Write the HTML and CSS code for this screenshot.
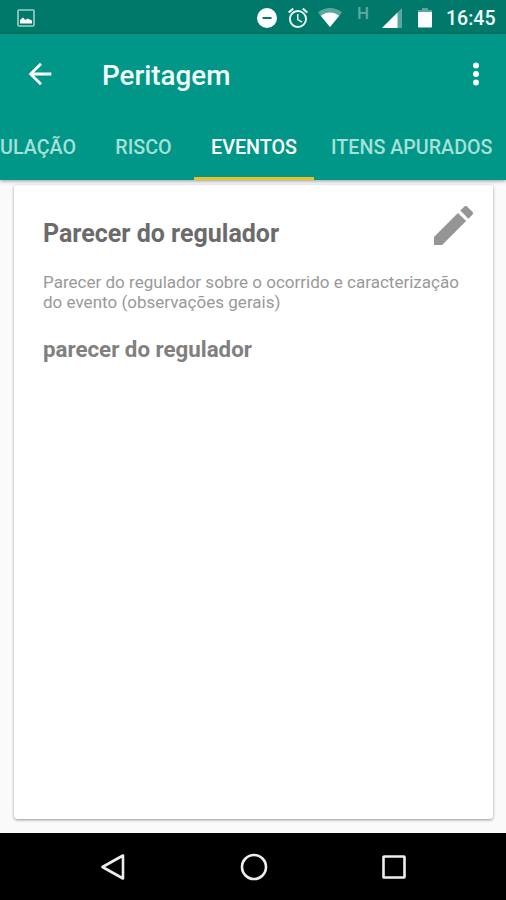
FILE: index.html
```html
<!DOCTYPE html>
<html lang="pt-BR">
<head>
  <meta charset="UTF-8" />
  <meta name="viewport" content="width=device-width, initial-scale=1.0"/>
  <title>Peritagem</title>
  <link rel="stylesheet" href="styles.css">
</head>
<body>

  <!-- Status bar -->
  <div class="status-bar">
    <svg class="picture-icon" viewBox="0 0 18 18" width="18" height="18">
      <rect x="1" y="1" width="16" height="16" rx="1" fill="none" stroke="#9fd0c9" stroke-width="1.6"/>
      <path d="M3 14.5V11l3-2.5 2.5 2.5 2-1.5 4.5 2v3z" fill="#fff"/>
    </svg>
    <div class="status-icons">
      <svg class="dnd-icon" viewBox="0 0 20 20" width="20" height="20">
        <circle cx="10" cy="10" r="10" fill="#fff"/>
        <path d="M5.5 10h9" stroke="#00796b" stroke-width="2"/>
      </svg>
      <svg class="alarm-icon" viewBox="2 2 20 20" width="20" height="20" fill="#e6f5f3">
        <path d="M22 5.72l-4.6-3.86-1.29 1.53 4.6 3.86L22 5.72zM7.88 3.39L6.6 1.86 2 5.71l1.29 1.53 4.59-3.85zM12.5 8H11v6l4.75 2.85.75-1.23-4-2.37V8zM12 4c-4.97 0-9 4.03-9 9s4.02 9 9 9a9 9 0 0 0 0-18zm0 16c-3.87 0-7-3.13-7-7s3.13-7 7-7 7 3.13 7 7-3.13 7-7 7z"/>
      </svg>
      <svg class="wifi-icon" viewBox="0 0 24 19" width="24" height="19">
        <path d="M12 19L0 4.5C3.400 1.500 7.600 0 12 0s8.600 1.500 12 4.500z" fill="#fff" fill-opacity=".35"/>
        <path d="M12 19L2.800 7.800C5.500 5.600 8.700 4.400 12 4.400s6.500 1.200 9.200 3.400z" fill="#fff"/>
      </svg>
      <span class="network">H</span>
      <svg class="signal-icon" viewBox="0 0 20 20" width="20" height="20">
        <path d="M0 20L20 0v20z" fill="#fff" fill-opacity=".35"/>
        <path d="M0 20L15.500 4.500V20z" fill="#fff"/>
      </svg>
      <svg class="battery-icon" viewBox="0 0 14 20" width="14" height="20">
        <path d="M4 0h6v2h4v3H0V2h4z" fill="#fff" fill-opacity=".35"/>
        <path d="M0 4h14v14.500a1 1 0 0 1-1 1H1a1 1 0 0 1-1-1z" fill="#fff"/>
      </svg>
      <span class="clock">16:45</span>
    </div>
  </div>

  <!-- App bar -->
  <header class="app-bar">
    <div class="toolbar">
      <svg class="back-icon" viewBox="0 0 24 24" width="34" height="34" fill="#fff">
        <path d="M20 11H7.830l5.590-5.590L12 4l-8 8 8 8 1.410-1.410L7.830 13H20v-2z"/>
      </svg>
      <h1>Peritagem</h1>
      <svg class="more-icon" viewBox="0 0 24 24" width="34" height="34" fill="#fff">
        <circle cx="12" cy="6" r="2.100"/>
        <circle cx="12" cy="12" r="2.100"/>
        <circle cx="12" cy="18" r="2.100"/>
      </svg>
    </div>
    <nav class="tabs">
      <a class="tab tab-cut">ULAÇÃO</a>
      <a class="tab tab-risco">RISCO</a>
      <a class="tab tab-eventos active">EVENTOS</a>
      <a class="tab tab-itens">ITENS APURADOS</a>
    </nav>
  </header>

  <!-- Content -->
  <main class="content">
    <section class="card">
      <div class="card-header">
        <h2>Parecer do regulador</h2>
        <svg class="edit-icon" viewBox="3 3 18 18" width="39" height="39" fill="#959595">
          <path d="M3 17.250V21h3.750L17.810 9.940l-3.750-3.750L3 17.250zM20.710 7.040a1 1 0 0 0 0-1.410l-2.340-2.340a1 1 0 0 0-1.410 0l-1.830 1.830 3.750 3.750 1.830-1.830z"/>
        </svg>
      </div>
      <p class="description">Parecer do regulador sobre o ocorrido e caracterização<br>do evento (observações gerais)</p>
      <p class="value">parecer do regulador</p>
    </section>
  </main>

  <!-- Navigation bar -->
  <footer class="nav-bar">
    <svg viewBox="0 0 28 28" width="28" height="28">
      <path d="M24 2.500v23L3.500 14z"/>
    </svg>
    <svg viewBox="0 0 28 28" width="28" height="28">
      <circle cx="14" cy="14" r="12"/>
    </svg>
    <svg viewBox="0 0 28 28" width="28" height="28">
      <rect x="3.500" y="3.500" width="21" height="21" rx=".5"/>
    </svg>
  </footer>

</body>
</html>
```
FILE: styles.css
```css
* {
  margin: 0;
  padding: 0;
  box-sizing: border-box;
}

body {
  height: 900px;
  display: flex;
  flex-direction: column;
  overflow: hidden;
  background: #fafafa;
  font-family: Roboto, sans-serif;
}

svg {
  display: block;
  flex-shrink: 0;
}

/* Status bar */
.status-bar {
  height: 34px;
  display: flex;
  justify-content: space-between;
  padding: 0 10px 0 17px;
  background: #00796b;
}

.picture-icon {
  margin-top: 9px;
}

.status-icons {
  display: flex;
  align-items: flex-start;
  padding-top: 8px;
}

.alarm-icon {
  margin-left: 11px;
  overflow: visible;
}

.wifi-icon {
  margin-left: 10px;
}

.network {
  width: 12px;
  margin: -5px 0 0 15px;
  font-size: 17px;
  font-weight: 500;
  line-height: 20px;
  color: #5eaaa1;
}

.signal-icon {
  margin-left: 13px;
}

.battery-icon {
  margin-left: 16px;
}

.clock {
  width: 50px;
  margin-left: 14px;
  font-size: 19.5px;
  font-weight: 500;
  line-height: 21px;
  color: #f2faf9;
  white-space: nowrap;
}

/* App bar */
.app-bar {
  height: 146px;
  background: #009688;
  box-shadow: 0 1px 4px rgba(0, 0, 0, 0.4);
  z-index: 1;
}

.toolbar {
  height: 79px;
  display: flex;
  align-items: center;
  padding: 0 13px 0 23px;
}

.toolbar h1 {
  flex: 1;
  margin: 3px 0 0 45px;
  font-size: 27.8px;
  font-weight: 500;
  color: #f4fcfb;
}

.tabs {
  height: 67px;
  display: flex;
  overflow: hidden;
}

.tab {
  display: flex;
  flex-shrink: 0;
  align-items: center;
  justify-content: center;
  border-bottom: 3px solid transparent;
  padding-top: 5px;
  font-size: 19.7px;
  font-weight: 500;
  color: #a5e0d9;
  white-space: nowrap;
}

.tab-cut {
  width: 93px;
  justify-content: flex-end;
  padding-right: 17px;
}

.tab-risco {
  width: 101px;
}

.tab-eventos {
  width: 120px;
}

.tab-itens {
  padding: 5px 17px 0;
}

.tab.active {
  color: #fff;
  border-bottom-color: #e6c22e;
}

/* Content */
.content {
  flex: 1;
  padding: 5px 13px 14px 14px;
}

.card {
  height: 100%;
  padding: 21px 20px 0 29px;
  background: #fff;
  border-radius: 3px;
  box-shadow: 0 1px 3px rgba(0, 0, 0, 0.4);
}

.card-header {
  height: 39px;
  display: flex;
  justify-content: space-between;
}

.card-header h2 {
  padding-top: 13px;
  font-size: 25px;
  font-weight: 700;
  line-height: 30px;
  color: #6b6b6b;
}

.description {
  margin-top: 27px;
  font-size: 17.05px;
  line-height: 20px;
  color: #999;
  white-space: nowrap;
}

.value {
  margin-top: 23px;
  font-size: 22.3px;
  font-weight: 700;
  line-height: 28px;
  color: #808080;
}

/* Navigation bar */
.nav-bar {
  height: 67px;
  display: flex;
  justify-content: center;
  gap: 112.5px;
  padding: 20px 0 0 1px;
  background: #000;
}

.nav-bar svg {
  fill: none;
  stroke: #eee;
  stroke-width: 2.6;
  stroke-linejoin: round;
}
```
